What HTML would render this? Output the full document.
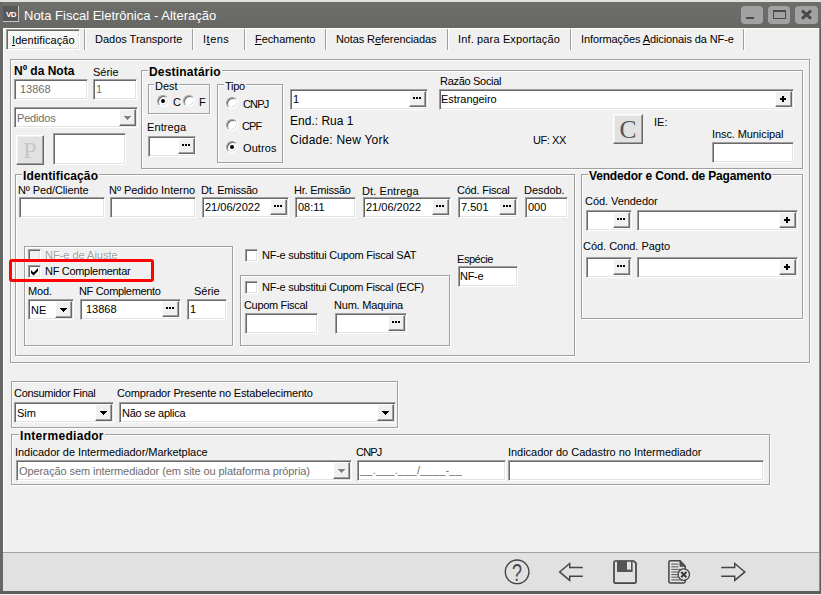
<!DOCTYPE html>
<html lang="pt-BR">
<head>
<meta charset="utf-8">
<title>Nota Fiscal Eletrônica - Alteração</title>
<style>
html,body{margin:0;padding:0;}
body{width:821px;height:595px;overflow:hidden;background:#f0f0f0;position:relative;
  font-family:"Liberation Sans","DejaVu Sans",sans-serif;font-size:11px;color:#000;line-height:13px;}
#win div,#win span,#win svg{position:absolute;box-sizing:border-box;white-space:nowrap;}
#win{position:absolute;left:0;top:0;width:821px;height:595px;overflow:hidden;background:#f0f0f0;}
/* text */
.t{height:13px;line-height:13px;}
.b{font-weight:bold;font-size:12px;letter-spacing:-0.05px;}
.g{color:#6d6d6d;}
.dis{color:#a0a0a0;text-shadow:1px 1px 0 #fff;}
.big{font-size:12px;}
u{text-decoration:underline;}
/* sunken edit box */
.in{background:#fff;border:1px solid;border-color:#a0a0a0 #fff #fff #a0a0a0;
  box-shadow:inset 1px 1px 0 #696969,inset -1px -1px 0 #e3e3e3;}
.in .t{left:2px;top:3px;}
/* raised button */
.bt{background:#f0f0f0;border:1px solid;border-color:#fff #696969 #696969 #fff;
  box-shadow:inset -1px -1px 0 #a0a0a0;}
.bb{background:#e1e1e1;border:1px solid;border-color:#fff #696969 #696969 #fff;
  box-shadow:inset -1px -1px 0 #a0a0a0,inset 1px 1px 0 #f0f0f0;font-family:"Liberation Serif",serif;text-align:center;}
/* groove group box */
.gr{border:1px solid #a0a0a0;box-shadow:inset 1px 1px 0 #fff,1px 1px 0 #fff;}
.lg{background:#f0f0f0;padding:0 1px;}
/* ellipsis dots / plus / arrow drawn in buttons */
.dots{left:3px;top:5px;width:8px;height:2px;background:linear-gradient(90deg,#000 0 2px,transparent 2px 3px,#000 3px 5px,transparent 5px 6px,#000 6px 8px);}
.plus{left:4px;top:4px;width:6px;height:6px;background:linear-gradient(#000,#000) 2px 0/2px 6px no-repeat,linear-gradient(#000,#000) 0 2px/6px 2px no-repeat;}
.arr{left:4px;top:6px;width:7px;height:4px;--c:#000;background:linear-gradient(var(--c),var(--c)) 0 0/7px 1px no-repeat,linear-gradient(var(--c),var(--c)) 1px 1px/5px 1px no-repeat,linear-gradient(var(--c),var(--c)) 2px 2px/3px 1px no-repeat,linear-gradient(var(--c),var(--c)) 3px 3px/1px 1px no-repeat;}
.arr.g2{--c:#838383;}
/* check & radio */
.cb{width:13px;height:13px;background:#fff;border:1px solid;border-color:#a0a0a0 #fff #fff #a0a0a0;
  box-shadow:inset 1px 1px 0 #696969,inset -1px -1px 0 #e3e3e3;}
.cb.d{background:#f0f0f0;}
.rd{width:12px;height:12px;border-radius:50%;background:#fff;border:1px solid;border-color:#a0a0a0 #fff #fff #a0a0a0;
  box-shadow:inset 1px 1px 0 #696969,inset -1px -1px 0 #e3e3e3;}
.rd i{position:absolute;left:3px;top:3px;width:4px;height:4px;border-radius:50%;background:#000;}
.sep{width:2px;height:21px;top:29px;border-left:1px solid #a0a0a0;border-right:1px solid #fff;}
.tab{top:33px;height:13px;line-height:13px;}
</style>
</head>
<body>
<div id="win">
<!-- window frame -->
<div style="left:0;top:0;width:821px;height:28px;background:linear-gradient(#6e6f6b,#676864);"></div>
<div style="left:0;top:0;width:821px;height:2px;background:#e2e2e2;"></div>
<div style="left:0;top:2px;width:3px;height:593px;background:#676766;"></div>
<div style="left:819px;top:28px;width:2px;height:567px;background:linear-gradient(90deg,#8e8e8e 0 1px,#5c5c5c 1px 2px);"></div>
<div style="left:3px;top:28px;width:816px;height:1px;background:#fff;"></div>
<div style="left:3px;top:28px;width:1px;height:524px;background:#fff;"></div>
<!-- title -->
<div style="left:3px;top:6px;width:16px;height:16px;background:#575757;border-right:1px solid #c4c4c4;border-bottom:1px solid #c4c4c4;"></div>
<div style="left:3.5px;top:10px;width:15px;height:9px;line-height:9px;font-size:8px;font-weight:bold;color:#fff;text-align:center;letter-spacing:-0.6px;">VD</div>
<div style="left:24px;top:8px;height:16px;line-height:16px;font-size:13px;color:#fff;">Nota Fiscal Eletrônica - Alteração</div>
<div style="left:741px;top:5.5px;width:22px;height:18.5px;background:#a2a2a2;border-radius:4px;"></div>
<div style="left:746px;top:17px;width:8px;height:2px;background:#4a4a4a;"></div>
<div style="left:768px;top:5.5px;width:22px;height:18.5px;background:#a2a2a2;border-radius:4px;"></div>
<div style="left:773px;top:10px;width:13px;height:9px;border:1px solid #4a4a4a;border-top-width:2px;"></div>
<div style="left:795px;top:5.5px;width:23px;height:18.5px;background:#a2a2a2;border-radius:4px;"></div>
<svg style="left:800px;top:9px" width="13" height="11" viewBox="0 0 13 11"><path d="M2 1.6 L11 9.6 M11 1.6 L2 9.6" stroke="#484848" stroke-width="2.9" fill="none"/></svg>

<!-- bottom frame + toolbar -->
<div style="left:3px;top:552px;width:816px;height:39px;background:#e1e1e1;border-top:1px solid #a0a0a0;"></div>
<div style="left:0;top:591px;width:821px;height:3px;background:#5e5e5e;"></div>
<div style="left:0;top:594px;width:821px;height:1px;background:#f2f2f2;"></div>
<!-- tabs -->
<div class="in" style="left:6px;top:29px;width:74px;height:21px;background:repeating-conic-gradient(#fff 0 25%,#f0f0f0 0 50%) 0 0/2px 2px;"></div>
<div class="tab" style="letter-spacing:0.063px;left:12px;top:34px;"><u>I</u>dentificação</div>
<div class="sep" style="left:84px;"></div>
<div class="tab" style="letter-spacing:-0.009px;left:95px;">Dados Transporte</div>
<div class="sep" style="left:192px;"></div>
<div class="tab" style="letter-spacing:0.505px;left:203px;">I<u>t</u>ens</div>
<div class="sep" style="left:244px;"></div>
<div class="tab" style="letter-spacing:-0.077px;left:255px;"><u>F</u>echamento</div>
<div class="sep" style="left:325px;"></div>
<div class="tab" style="letter-spacing:-0.12px;left:336px;">Notas R<u>e</u>ferenciadas</div>
<div class="sep" style="left:447px;"></div>
<div class="tab" style="letter-spacing:0.147px;left:458px;">Inf. para Exportação</div>
<div class="sep" style="left:570px;"></div>
<div class="tab" style="letter-spacing:-0.107px;left:581px;">Informações <u>A</u>dicionais da NF-e</div>
<div class="sep" style="left:743px;"></div>
<!-- page panel -->
<div class="gr" style="left:10px;top:59px;width:800px;height:304px;"></div>

<!-- ===== top-left: nota ===== -->
<div class="t b" style="letter-spacing:-0.009px;left:14px;top:65px;">Nº da Nota</div>
<div class="t" style="left:93px;top:66px;">Série</div>
<div class="in" style="left:14px;top:79px;width:74px;height:21px;"><div class="t g" style="left:5px;">13868</div></div>
<div class="in" style="left:93px;top:79px;width:44px;height:21px;"><div class="t g">1</div></div>
<div class="in" style="left:14px;top:107px;width:124px;height:21px;"><div class="t g" style="letter-spacing:-0.181px;top:4px;">Pedidos</div>
  <div class="bt" style="left:104px;top:1px;width:17px;height:17px;"><div class="arr g2"></div></div></div>
<div class="bb" style="left:16px;top:135px;width:28px;height:30px;font-size:24px;line-height:28px;color:#c6c6c6;">P</div>
<div class="in" style="left:53px;top:133px;width:73px;height:32px;"></div>

<!-- ===== Destinatário ===== -->
<div class="gr" style="left:141px;top:70px;width:662px;height:99px;"></div>
<div class="t b lg" style="letter-spacing:0.195px;left:148px;top:66px;">Destinatário</div>
<div class="gr" style="left:148px;top:84px;width:62px;height:30px;"></div>
<div class="t lg" style="left:154px;top:80px;">Dest</div>
<div class="rd" style="left:157px;top:95px;"><i></i></div>
<div class="t" style="left:173px;top:96px;">C</div>
<div class="rd" style="left:183px;top:95px;"></div>
<div class="t" style="left:199px;top:96px;">F</div>
<div class="t" style="letter-spacing:0.11px;left:147px;top:121px;">Entrega</div>
<div class="in" style="left:148px;top:136px;width:48px;height:21px;"><div class="bt" style="left:29px;top:1px;width:17px;height:16px;"><div class="dots"></div></div></div>
<div class="gr" style="left:217px;top:84px;width:66px;height:79px;"></div>
<div class="t lg" style="letter-spacing:-0.3px;left:224px;top:80px;">Tipo</div>
<div class="rd" style="left:226px;top:97px;"></div>
<div class="t" style="letter-spacing:-0.834px;left:243px;top:98px;">CNPJ</div>
<div class="rd" style="left:226px;top:119px;"></div>
<div class="t" style="letter-spacing:-0.9px;left:242px;top:120px;">CPF</div>
<div class="rd" style="left:226px;top:141px;"><i></i></div>
<div class="t" style="letter-spacing:0.097px;left:243px;top:142px;">Outros</div>
<div class="in" style="left:290px;top:89px;width:138px;height:21px;"><div class="t">1</div>
  <div class="bt" style="left:118px;top:1px;width:17px;height:16px;"><div class="dots"></div></div></div>
<div class="t big" style="letter-spacing:0.011px;left:290px;top:115px;">End.: Rua 1</div>
<div class="t big" style="letter-spacing:0.219px;left:290px;top:134px;">Cidade: New York</div>
<div class="t" style="letter-spacing:-0.302px;left:440px;top:75px;">Razão Social</div>
<div class="in" style="left:439px;top:89px;width:355px;height:21px;"><div class="t" style="letter-spacing:-0.051px;left:1px;">Estrangeiro</div>
  <div class="bt" style="left:335px;top:1px;width:17px;height:16px;"><div class="plus" style="left:4px;top:4px;"></div></div></div>
<div class="t" style="letter-spacing:-0.426px;left:533px;top:134px;">UF: XX</div>
<div class="bb" style="left:613px;top:114px;width:30px;height:30px;font-size:25.5px;line-height:29px;color:#555;">C</div>
<div class="t" style="left:654px;top:116px;">IE:</div>
<div class="t" style="letter-spacing:-0.091px;left:712px;top:128px;">Insc. Municipal</div>
<div class="in" style="left:712px;top:142px;width:82px;height:21px;"></div>

<!-- ===== Identificação ===== -->
<div class="gr" style="left:15px;top:174px;width:560px;height:182px;"></div>
<div class="t b lg" style="letter-spacing:0.137px;left:22px;top:170px;">Identificação</div>
<div class="t" style="letter-spacing:-0.106px;left:18px;top:184px;">Nº Ped/Cliente</div>
<div class="in" style="left:19px;top:197px;width:86px;height:21px;"></div>
<div class="t" style="letter-spacing:-0.028px;left:109px;top:184px;">Nº Pedido Interno</div>
<div class="in" style="left:110px;top:197px;width:86px;height:21px;"></div>
<div class="t" style="letter-spacing:-0.236px;left:201px;top:184px;">Dt. Emissão</div>
<div class="in" style="left:202px;top:197px;width:87px;height:21px;"><div class="t">21/06/2022</div>
  <div class="bt" style="left:67px;top:1px;width:17px;height:16px;"><div class="dots"></div></div></div>
<div class="t" style="letter-spacing:-0.236px;left:294px;top:184px;">Hr. Emissão</div>
<div class="in" style="left:295px;top:197px;width:61px;height:21px;"><div class="t">08:11</div></div>
<div class="t" style="letter-spacing:0.087px;left:362px;top:185px;">Dt. Entrega</div>
<div class="in" style="left:363px;top:197px;width:88px;height:21px;"><div class="t">21/06/2022</div>
  <div class="bt" style="left:68px;top:1px;width:17px;height:16px;"><div class="dots"></div></div></div>
<div class="t" style="letter-spacing:-0.221px;left:457px;top:184px;">Cód. Fiscal</div>
<div class="in" style="left:458px;top:197px;width:60px;height:21px;"><div class="t">7.501</div>
  <div class="bt" style="left:40px;top:1px;width:17px;height:16px;"><div class="dots"></div></div></div>
<div class="t" style="letter-spacing:-0.055px;left:524px;top:184px;">Desdob.</div>
<div class="in" style="left:525px;top:197px;width:43px;height:21px;"><div class="t">000</div></div>

<div class="gr" style="left:24px;top:246px;width:209px;height:100px;"></div>
<div class="cb d" style="left:28px;top:249px;"></div>
<div class="t dis" style="letter-spacing:-0.012px;left:45px;top:249px;">NF-e de Ajuste</div>
<div class="cb" style="left:28px;top:265px;"></div>
<svg style="left:31px;top:268px" width="7" height="8" viewBox="0 0 7 8"><path d="M0 2 L2.5 4.5 L7 0 L7 3 L2.5 7.5 L0 5 Z" fill="#000"/></svg>
<div class="t" style="letter-spacing:-0.304px;left:45px;top:265px;">NF Complementar</div>
<div style="left:9px;top:259px;width:145px;height:23px;border:3px solid #fd0303;border-radius:3px;"></div>
<div class="t" style="letter-spacing:-0.092px;left:28px;top:285px;">Mod.</div>
<div class="in" style="left:28px;top:299px;width:46px;height:21px;"><div class="t" style="top:4px;">NE</div>
  <div class="bt" style="left:26px;top:1px;width:17px;height:17px;"><div class="arr"></div></div></div>
<div class="t" style="letter-spacing:-0.329px;left:79px;top:285px;">NF Complemento</div>
<div class="in" style="left:80px;top:299px;width:101px;height:21px;"><div class="t" style="left:5px;">13868</div>
  <div class="bt" style="left:81px;top:1px;width:17px;height:16px;"><div class="dots"></div></div></div>
<div class="t" style="left:194px;top:285px;">Série</div>
<div class="in" style="left:187px;top:299px;width:40px;height:21px;"><div class="t">1</div></div>

<div class="cb" style="left:245px;top:249px;"></div>
<div class="t" style="letter-spacing:-0.245px;left:262px;top:249px;">NF-e substitui Cupom Fiscal SAT</div>
<div class="gr" style="left:240px;top:275px;width:210px;height:71px;"></div>
<div class="cb" style="left:245px;top:281px;"></div>
<div class="t" style="letter-spacing:-0.259px;left:262px;top:281px;">NF-e substitui Cupom Fiscal (ECF)</div>
<div class="t" style="letter-spacing:-0.329px;left:244px;top:299px;">Cupom Fiscal</div>
<div class="in" style="left:245px;top:313px;width:73px;height:21px;"></div>
<div class="t" style="letter-spacing:-0.212px;left:334px;top:299px;">Num. Maquina</div>
<div class="in" style="left:335px;top:313px;width:72px;height:21px;"><div class="bt" style="left:52px;top:1px;width:17px;height:16px;"><div class="dots"></div></div></div>
<div class="t" style="letter-spacing:-0.45px;left:457px;top:253px;">Espécie</div>
<div class="in" style="left:458px;top:266px;width:60px;height:21px;"><div class="t" style="letter-spacing:-0.3px;left:1px;">NF-e</div></div>

<!-- ===== Vendedor ===== -->
<div class="gr" style="left:581px;top:174px;width:222px;height:145px;"></div>
<div class="t b lg" style="letter-spacing:-0.17px;left:588px;top:170px;">Vendedor e Cond. de Pagamento</div>
<div class="t" style="letter-spacing:-0.061px;left:585px;top:195px;">Cód. Vendedor</div>
<div class="in" style="left:586px;top:210px;width:46px;height:21px;"><div class="bt" style="left:26px;top:1px;width:17px;height:16px;"><div class="dots"></div></div></div>
<div class="in" style="left:637px;top:210px;width:161px;height:21px;"><div class="bt" style="left:141px;top:1px;width:17px;height:16px;"><div class="plus" style="left:4px;top:4px;"></div></div></div>
<div class="t" style="letter-spacing:-0.028px;left:583px;top:240px;">Cód. Cond. Pagto</div>
<div class="in" style="left:586px;top:257px;width:46px;height:21px;"><div class="bt" style="left:26px;top:1px;width:17px;height:16px;"><div class="dots"></div></div></div>
<div class="in" style="left:637px;top:257px;width:161px;height:21px;"><div class="bt" style="left:141px;top:1px;width:17px;height:16px;"><div class="plus" style="left:4px;top:4px;"></div></div></div>

<!-- ===== Consumidor ===== -->
<div class="gr" style="left:11px;top:381px;width:387px;height:47px;"></div>
<div class="t" style="letter-spacing:-0.294px;left:14px;top:387px;">Consumidor Final</div>
<div class="in" style="left:14px;top:402px;width:100px;height:21px;"><div class="t" style="top:4px;">Sim</div>
  <div class="bt" style="left:80px;top:1px;width:17px;height:17px;"><div class="arr"></div></div></div>
<div class="t" style="letter-spacing:-0.164px;left:117px;top:387px;">Comprador Presente no Estabelecimento</div>
<div class="in" style="left:119px;top:402px;width:277px;height:21px;"><div class="t" style="letter-spacing:-0.258px;top:4px;">Não se aplica</div>
  <div class="bt" style="left:257px;top:1px;width:17px;height:17px;"><div class="arr"></div></div></div>

<!-- ===== Intermediador ===== -->
<div class="gr" style="left:11px;top:434px;width:759px;height:51px;"></div>
<div class="t b lg" style="letter-spacing:0.294px;left:19px;top:430px;">Intermediador</div>
<div class="t" style="letter-spacing:-0.046px;left:15px;top:446px;">Indicador de Intermediador/Marketplace</div>
<div class="in" style="left:16px;top:460px;width:336px;height:21px;"><div class="t g" style="letter-spacing:-0.087px;top:4px;">Operação sem intermediador (em site ou plataforma própria)</div>
  <div class="bt" style="left:316px;top:1px;width:17px;height:17px;"><div class="arr g2"></div></div></div>
<div class="t" style="letter-spacing:-0.8px;left:356px;top:446px;">CNPJ</div>
<div class="in" style="left:357px;top:460px;width:149px;height:21px;"><div class="t g" style="letter-spacing:0.195px;">__.___.___/____-__</div></div>
<div class="t" style="letter-spacing:-0.028px;left:508px;top:446px;">Indicador do Cadastro no Intermediador</div>
<div class="in" style="left:508px;top:460px;width:256px;height:21px;"></div>

<!-- ===== toolbar icons ===== -->
<svg style="left:500px;top:555px" width="260" height="35" viewBox="500 555 260 35" fill="none" stroke="#444" stroke-width="1.4">
  <circle cx="517.1" cy="571.8" r="11.8"/>
  <path d="M582.8 567.5 H569.7 V563.4 L559.6 571.9 L569.7 580.4 V576.3 H582.8" stroke-linejoin="miter"/>
  <path d="M721.2 567.5 H734.7 V563.4 L744.9 571.9 L734.7 580.4 V576.3 H721.2" stroke-linejoin="miter"/>
  <!-- save -->
  <path d="M615.5 561 H633.8 L636 563.2 V581.7 Q636 583.2 634.5 583.2 H615.5 Q614 583.2 614 581.7 V562.5 Q614 561 615.5 561 Z" stroke-width="1.7"/>
  <path d="M617 560.6 H632.6 V572 H617 Z" fill="#555" stroke="none"/>
  <path d="M627 561.8 H631 V569.6 H627 Z" fill="#e4e4e4" stroke="none"/>
  <!-- document -->
  <path d="M680 560.8 H670.3 Q668.9 560.8 668.9 562.2 V581.6 Q668.9 583 670.3 583 H683.8 Q685.2 583 685.2 581.6 V566.2 Z" stroke-width="1.5"/>
  <path d="M680 560.8 V566.2 H685.2 Z" fill="#555" stroke-width="1"/>
  <path d="M671.3 564.1 H678.5 M671.3 566.8 H678.5 M671.3 569.4 H683 M671.3 572 H683 M671.3 574.6 H683 M671.3 577.2 H683 M671.3 579.9 H683" stroke-width="1" stroke="#555"/>
  <circle cx="683.8" cy="574.6" r="5.7" fill="#e1e1e1" stroke-width="1.3"/>
  <path d="M681.2 572 L686.4 577.2 M686.4 572 L681.2 577.2" stroke-width="2" stroke="#3a3a3a"/>
</svg>
<div style="left:507px;top:560px;width:20px;height:26px;line-height:26px;font-size:23px;color:#4a4a4a;text-align:center;transform:scaleX(0.78);">?</div>
</div>
</body>
</html>
